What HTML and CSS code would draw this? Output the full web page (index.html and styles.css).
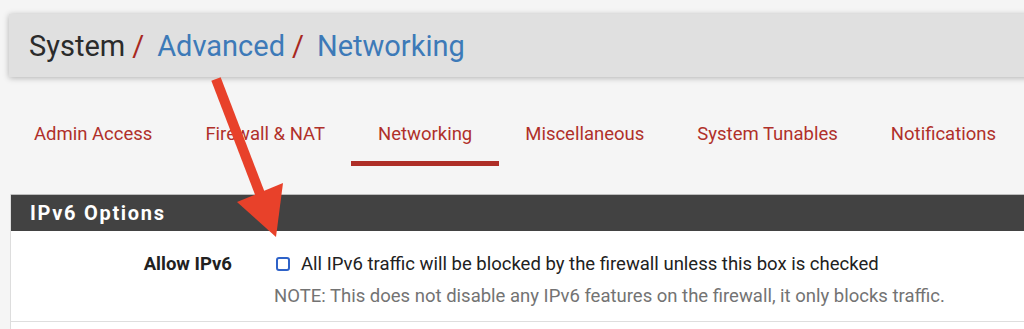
FILE: index.html
```html
<!DOCTYPE html>
<html>
<head>
<meta charset="utf-8">
<link rel="stylesheet" href="styles.css">
</head>
<body>
<div class="page">
  <div class="breadcrumb">
    <span class="crumb-plain">System</span><span class="sep">/</span>
    <a class="crumb-link">Advanced</a><span class="sep">/</span>
    <a class="crumb-link">Networking</a>
  </div>
  <ul class="tabs">
    <li class="tab">Admin Access</li>
    <li class="tab">Firewall &amp; NAT</li>
    <li class="tab active">Networking</li>
    <li class="tab">Miscellaneous</li>
    <li class="tab">System Tunables</li>
    <li class="tab">Notifications</li>
  </ul>
  <div class="panel">
    <div class="panel-heading">IPv6 Options</div>
    <div class="form-row">
      <div class="form-label">Allow IPv6</div>
      <div class="form-field">
        <label class="check-line"><span class="checkbox"></span>All IPv6 traffic will be blocked by the firewall unless this box is checked</label>
        <div class="help">NOTE: This does not disable any IPv6 features on the firewall, it only blocks traffic.</div>
      </div>
    </div>
    <div class="form-row next"></div>
  </div>
</div>
<svg class="arrow" width="1024" height="329" viewBox="0 0 1024 329">
  <line x1="216" y1="79" x2="262" y2="199" stroke="#e8412a" stroke-width="10"/>
  <polygon points="237,202 283,183 276,237" fill="#e8412a"/>
</svg>
</body>
</html>
```
FILE: styles.css
```css
html, body {
  margin: 0;
  padding: 0;
  background: #f5f5f5;
  overflow: hidden;
  width: 1024px;
  height: 329px;
}
body {
  position: relative;
  font-family: Roboto, "Liberation Sans", sans-serif;
  color: #212121;
}
.page {
  padding-top: 14px;
}
.breadcrumb {
  margin-left: 9px;
  margin-right: -30px;
  height: 63px;
  background: #e0e0e0;
  box-shadow: 0 1px 6px rgba(0,0,0,0.28);
  display: flex;
  align-items: center;
  padding-left: 20px;
  font-size: 29px;
  color: #2b2b2b;
  white-space: pre;
}
.sep {
  color: #a8291f;
  margin: 0 13px 0 7px;
}
.crumb-link {
  color: #3d7ab8;
}
.tabs {
  list-style: none;
  margin: 45px 0 0 8px;
  padding: 0;
  display: flex;
  white-space: nowrap;
}
.tab {
  font-size: 18.5px;
  line-height: 24px;
  color: #b0302a;
  padding: 0 26.5px 15px;
  border-bottom: 5px solid transparent;
}
.tab:first-child {
  padding-left: 26px;
}
.tab.active {
  border-bottom-color: #ae2e27;
}
.panel {
  margin: 28px -30px 0 10px;
  background: #fff;
  border-left: 1px solid #ddd;
}
.panel-heading {
  background: #424242;
  border-top: 1px solid #bdbdbd;
  color: #fff;
  font-weight: bold;
  font-size: 20px;
  letter-spacing: 1.7px;
  height: 36px;
  line-height: 36px;
  padding-left: 19px;
}
.form-row {
  display: flex;
  padding: 20px 0 12px;
  border-bottom: 1px solid #dedede;
}
.form-row.next {
  border-bottom: none;
  height: 10px;
  padding: 0;
}
.form-label {
  width: 221px;
  text-align: right;
  font-weight: bold;
  font-size: 18.5px;
  line-height: 26px;
  color: #212121;
}
.form-field {
  margin-left: 42px;
}
.check-line {
  display: flex;
  align-items: center;
  font-size: 18.5px;
  line-height: 26px;
  color: #212121;
  white-space: nowrap;
}
.checkbox {
  width: 10px;
  height: 10px;
  border: 2px solid #2e62c8;
  border-radius: 3px;
  margin: 0 11px 0 2px;
  background: #fff;
}
.help {
  margin-top: 6px;
  font-size: 18.5px;
  line-height: 26px;
  color: #737373;
  white-space: nowrap;
}
.arrow {
  position: absolute;
  left: 0;
  top: 0;
}
```
